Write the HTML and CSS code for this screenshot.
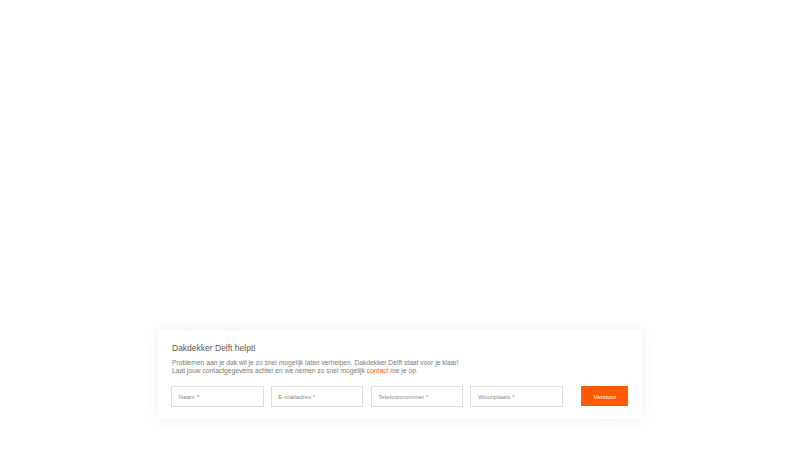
FILE: index.html
```html
<!DOCTYPE html>
<html lang="nl">
<head>
<meta charset="utf-8">
<title>Dakdekker Delft</title>
<link rel="stylesheet" href="styles.css">
</head>
<body>
<div class="page">
  <section class="card">
    <h2 class="title">Dakdekker Delft helpt!</h2>
    <p class="intro">Problemen aan je dak wil je zo snel mogelijk laten verhelpen. Dakdekker Delft staat voor je klaar!<br>Laat jouw contactgegevens achter en we nemen zo snel mogelijk <a class="link" href="#">contact</a> me je op.</p>
    <form class="form">
      <input class="field" type="text" placeholder="Naam *">
      <input class="field" type="email" placeholder="E-mailadres *">
      <input class="field" type="tel" placeholder="Telefoonnummer *">
      <input class="field" type="text" placeholder="Woonplaats *">
      <button class="submit" type="button">Verstuur</button>
    </form>
  </section>
</div>
</body>
</html>
```

FILE: styles.css
```css
html, body {
  margin: 0;
  padding: 0;
  background: #ffffff;
}
body {
  font-family: "Liberation Sans", Arial, Helvetica, sans-serif;
  width: 800px;
  height: 450px;
  overflow: hidden;
}
.page {
  padding-top: 330px;
}
.card {
  width: 484px;
  height: 89px;
  box-sizing: border-box;
  margin: 0 auto;
  background: #ffffff;
  box-shadow: 0 0 12px rgba(0, 0, 0, 0.08);
  padding: 12.5px 14px 0 14px;
}
.title {
  margin: 0;
  font-size: 8.5px;
  line-height: 11px;
  font-weight: normal;
  color: #5a5a5a;
}
.intro {
  margin: 5px 0 0 0;
  font-size: 6.7px;
  line-height: 8.5px;
  color: #7a7a7a;
}
.link {
  color: #ff5a00;
  text-decoration: none;
}
.form {
  display: flex;
  align-items: center;
  margin: 10px 0 0 -1px;
  gap: 7.33px;
}
.field {
  flex: 0 0 92.5px;
  width: 92.5px;
  height: 21px;
  box-sizing: border-box;
  border: 1px solid #dcdcdc;
  background: #ffffff;
  padding: 0 0 0 6.5px;
  margin: 0;
  font-family: "Liberation Sans", Arial, sans-serif;
  font-size: 6.2px;
  font-weight: normal;
  color: #777777;
  outline: none;
}
.field::placeholder {
  color: #8a8a8a;
}
.submit {
  flex: 0 0 47px;
  margin-left: 11.17px;
  width: 47px;
  height: 20px;
  border: none;
  background: #ff5a00;
  color: #ffffff;
  font-family: "Liberation Sans", Arial, sans-serif;
  font-size: 6.2px;
  font-weight: normal;
  padding: 0;
}
```
